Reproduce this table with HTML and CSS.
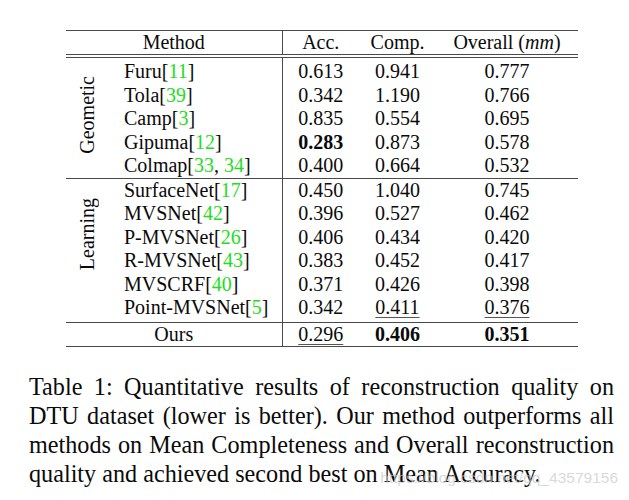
FILE: index.html
```html
<!DOCTYPE html>
<html>
<head>
<meta charset="utf-8">
<link rel="stylesheet" href="styles.css">
</head>
<body>
<div class="page">
  <table class="results">
    <colgroup>
      <col class="c-group">
      <col class="c-method">
      <col class="c-acc">
      <col class="c-comp">
      <col class="c-overall">
    </colgroup>
    <thead>
      <tr class="head">
        <th colspan="2" class="m">Method</th>
        <th>Acc.</th>
        <th>Comp.</th>
        <th>Overall (<i>mm</i>)</th>
      </tr>
    </thead>
    <tbody class="geo">
      <tr class="first">
        <td rowspan="5" class="grp"><span class="rot">Geometic</span></td>
        <td class="name">Furu[<span class="ref">11</span>]</td><td>0.613</td><td>0.941</td><td>0.777</td>
      </tr>
      <tr><td class="name">Tola[<span class="ref">39</span>]</td><td>0.342</td><td>1.190</td><td>0.766</td></tr>
      <tr><td class="name">Camp[<span class="ref">3</span>]</td><td>0.835</td><td>0.554</td><td>0.695</td></tr>
      <tr><td class="name">Gipuma[<span class="ref">12</span>]</td><td><b>0.283</b></td><td>0.873</td><td>0.578</td></tr>
      <tr><td class="name">Colmap[<span class="ref">33</span>, <span class="ref">34</span>]</td><td>0.400</td><td>0.664</td><td>0.532</td></tr>
    </tbody>
    <tbody class="learn">
      <tr>
        <td rowspan="6" class="grp grp-learn"><span class="rot">Learning</span></td>
        <td class="name">SurfaceNet[<span class="ref">17</span>]</td><td>0.450</td><td>1.040</td><td>0.745</td>
      </tr>
      <tr><td class="name">MVSNet[<span class="ref">42</span>]</td><td>0.396</td><td>0.527</td><td>0.462</td></tr>
      <tr><td class="name">P-MVSNet[<span class="ref">26</span>]</td><td>0.406</td><td>0.434</td><td>0.420</td></tr>
      <tr><td class="name">R-MVSNet[<span class="ref">43</span>]</td><td>0.383</td><td>0.452</td><td>0.417</td></tr>
      <tr><td class="name">MVSCRF[<span class="ref">40</span>]</td><td>0.371</td><td>0.426</td><td>0.398</td></tr>
      <tr class="last"><td class="name">Point-MVSNet[<span class="ref">5</span>]</td><td>0.342</td><td><u>0.411</u></td><td><u>0.376</u></td></tr>
    </tbody>
    <tbody class="ours">
      <tr><td colspan="2" class="m">Ours</td><td><u>0.296</u></td><td><b>0.406</b></td><td><b>0.351</b></td></tr>
    </tbody>
  </table>

  <p class="caption">Table 1: Quantitative results of reconstruction quality on DTU dataset (lower is better). Our method outperforms all methods on Mean Completeness and Overall reconstruction quality and achieved second best on Mean Accuracy.</p>

  <div class="watermark">https://blog.csdn.net/qq_43579156</div>
</div>
</body>
</html>
```

FILE: styles.css
```css
html, body {
  margin: 0;
  padding: 0;
  background: #ffffff;
}

.page {
  position: relative;
  width: 629px;
  height: 500px;
  overflow: hidden;
  font-family: "Liberation Serif", "Times New Roman", serif;
  color: #0a0a0a;
}

.results {
  margin: 30px 0 0 66px;
  width: 512px;
  border-collapse: collapse;
  table-layout: fixed;
  font-size: 20px;
  border-top: 1px solid #4a4a4a;
  border-bottom: 1px solid #4a4a4a;
}

.c-group { width: 42px; }
.c-method { width: 174px; }
.c-acc { width: 77px; }
.c-comp { width: 77px; }
.c-overall { width: 142px; }

.results th,
.results td {
  padding: 0;
  height: 23.5px;
  line-height: 23.5px;
  text-align: center;
  font-weight: normal;
  white-space: nowrap;
}

.results thead th {
  height: 23px;
  line-height: 23px;
  border-bottom: 4px double #4a4a4a;
}

.results .m {
  border-right: 1px solid #4a4a4a;
}

.results .name {
  text-align: left;
  padding-left: 16px;
  border-right: 1px solid #4a4a4a;
}

.results .first td {
  padding-top: 2px;
}
.results .first td.grp {
  padding-top: 0;
}

.results .last td {
  padding-bottom: 2px;
}

.geo {
  border-bottom: 1px solid #4a4a4a;
}

.learn {
  border-bottom: 1px solid #4a4a4a;
}

.ours td {
  height: 23px;
  line-height: 23px;
}

.grp {
  vertical-align: middle;
}

.grp-learn {
  padding-bottom: 26px !important;
}

.rot {
  display: inline-block;
  writing-mode: vertical-rl;
  transform: rotate(180deg);
  line-height: 22px;
}

.ref {
  color: #22dd22;
}

.results b {
  font-weight: bold;
}

.results u {
  text-decoration: underline;
  text-decoration-color: #555;
  text-underline-offset: 3px;
  text-decoration-thickness: 1px;
}

.caption {
  margin: 25px 0 0 29px;
  width: 585px;
  font-size: 24.2px;
  line-height: 29px;
  text-align: justify;
  color: #0a0a0a;
}

.watermark {
  position: absolute;
  right: 11px;
  top: 469px;
  font-family: "Liberation Sans", Arial, sans-serif;
  font-size: 15.5px;
  line-height: 18px;
  color: rgba(200, 200, 200, 0.7);
}
```
